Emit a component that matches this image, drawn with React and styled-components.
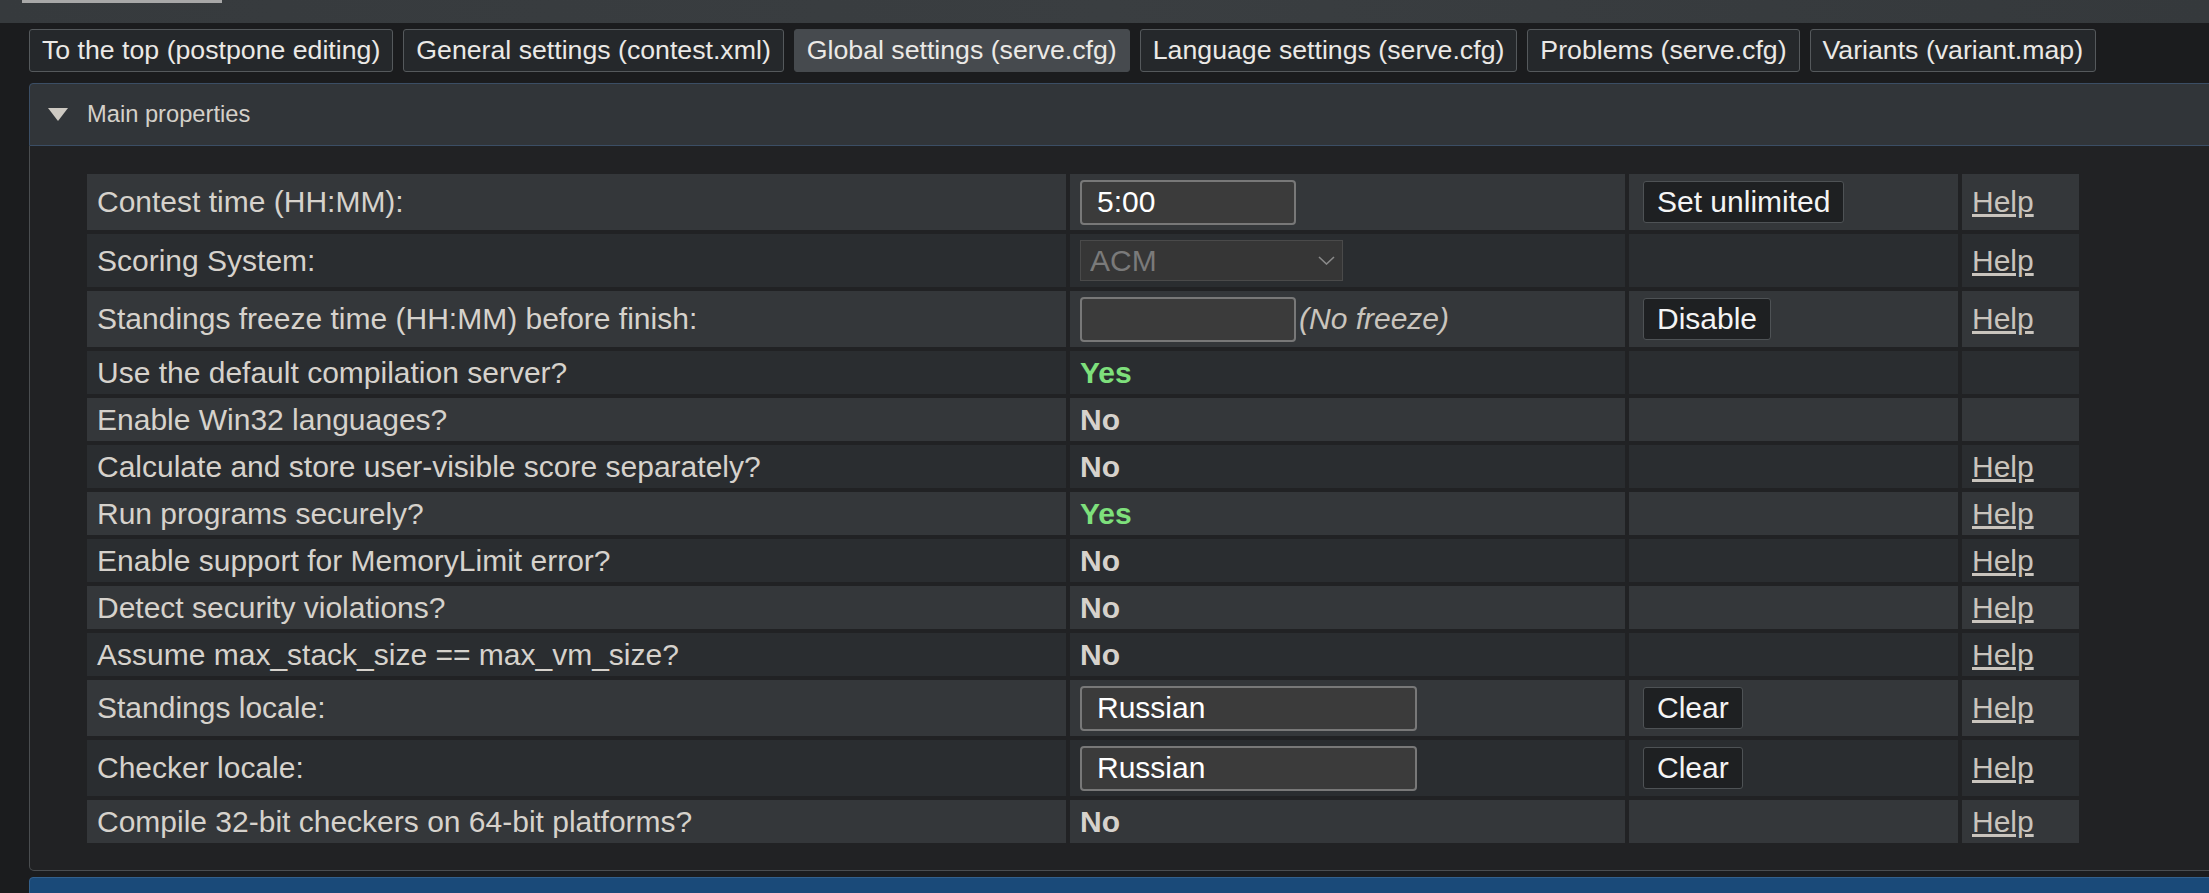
import styled, { createGlobalStyle } from "styled-components";

const GlobalStyle = createGlobalStyle`
  html, body {
    margin: 0;
    padding: 0;
    overflow: hidden;
    background: #1b1c1e;
    font-family: "Liberation Sans", Arial, sans-serif;
  }
`;

const tabs = [
  { name: "To the top (postpone editing)" },
  { name: "General settings (contest.xml)" },
  { name: "Global settings (serve.cfg)", active: true },
  { name: "Language settings (serve.cfg)" },
  { name: "Problems (serve.cfg)" },
  { name: "Variants (variant.map)" },
];

// kind: input | select | yes | no
const rows = [
  { label: "Contest time (HH:MM):", kind: "input", value: "5:00", w: 216, action: "Set unlimited", help: true, h: 56 },
  { label: "Scoring System:", kind: "select", value: "ACM", help: true, h: 53 },
  { label: "Standings freeze time (HH:MM) before finish:", kind: "input", value: "", w: 216, note: "(No freeze)", action: "Disable", help: true, h: 56 },
  { label: "Use the default compilation server?", kind: "yes", help: false, h: 43 },
  { label: "Enable Win32 languages?", kind: "no", help: false, h: 43 },
  { label: "Calculate and store user-visible score separately?", kind: "no", help: true, h: 43 },
  { label: "Run programs securely?", kind: "yes", help: true, h: 43 },
  { label: "Enable support for MemoryLimit error?", kind: "no", help: true, h: 43 },
  { label: "Detect security violations?", kind: "no", help: true, h: 43 },
  { label: "Assume max_stack_size == max_vm_size?", kind: "no", help: true, h: 43 },
  { label: "Standings locale:", kind: "input", value: "Russian", w: 337, action: "Clear", help: true, h: 56 },
  { label: "Checker locale:", kind: "input", value: "Russian", w: 337, action: "Clear", help: true, h: 56 },
  { label: "Compile 32-bit checkers on 64-bit platforms?", kind: "no", help: true, h: 43 },
];

const App = () => {
  return (
    <>
      <GlobalStyle />
      <TopBar>
        <ScrollMark />
      </TopBar>
      <Main>
        <Tabs>
          {tabs.map((t) => (
            <Tab key={t.name} $active={t.active}>
              {t.name}
            </Tab>
          ))}
        </Tabs>
        <Panel>
          <PanelHeader>
            <svg width="20" height="13" viewBox="0 0 20 13">
              <polygon points="0,0 20,0 10,13" fill="#cdc9c2" />
            </svg>
            <span>Main properties</span>
          </PanelHeader>
          <PanelBody>
            <SettingsTable>
              <colgroup>
                <col style={{ width: 979 }} />
                <col style={{ width: 555 }} />
                <col style={{ width: 329 }} />
                <col style={{ width: 117 }} />
              </colgroup>
              <tbody>
                {rows.map((r, i) => (
                  <Row key={r.label} $h={r.h} $light={i % 2 === 0}>
                    <Cell>{r.label}</Cell>
                    <Cell>
                      <ValueCell row={r} />
                    </Cell>
                    <Cell>{r.action && <ActionButton>{r.action}</ActionButton>}</Cell>
                    <Cell>{r.help && <HelpLink href="#">Help</HelpLink>}</Cell>
                  </Row>
                ))}
              </tbody>
            </SettingsTable>
          </PanelBody>
        </Panel>
        <NextPanel />
      </Main>
    </>
  );
};

const ValueCell = ({ row }) => {
  if (row.kind === "input") {
    return (
      <>
        <TextInput defaultValue={row.value} $w={row.w} />
        {row.note && <Note>{row.note}</Note>}
      </>
    );
  }
  if (row.kind === "select") {
    return (
      <SelectWrap>
        <FakeSelect disabled defaultValue={row.value}>
          <option>{row.value}</option>
        </FakeSelect>
        <Chevron width="17" height="9" viewBox="0 0 17 9">
          <polyline points="1,1 8.5,8 16,1" fill="none" stroke="#8a8a8a" strokeWidth="1.6" />
        </Chevron>
      </SelectWrap>
    );
  }
  return <Flag $yes={row.kind === "yes"}>{row.kind === "yes" ? "Yes" : "No"}</Flag>;
};

const TopBar = styled.div`
  height: 23px;
  background: linear-gradient(90deg, #363a3d, #3a3e41 50%, #35393c);
  position: relative;
`;

const ScrollMark = styled.div`
  position: absolute;
  left: 22px;
  top: 0;
  width: 200px;
  height: 3px;
  background: #a8a8a8;
`;

const Main = styled.div`
  padding: 6px 0 0 29px;
`;

const Tabs = styled.div`
  display: flex;
  gap: 10px;
`;

const Tab = styled.button`
  height: 43px;
  box-sizing: border-box;
  margin: 0;
  padding: 0 12px;
  font-family: "Liberation Sans", Arial, sans-serif;
  font-size: 26.7px;
  color: #ebe9e6;
  background: ${(p) => (p.$active ? "#464a4e" : "#25282b")};
  border: 1px solid ${(p) => (p.$active ? "#464a4e" : "#55595c")};
  border-radius: 3px;
  white-space: nowrap;
`;

const Panel = styled.div`
  margin-top: 11px;
  width: 2300px;
`;

const PanelHeader = styled.div`
  height: 63px;
  box-sizing: border-box;
  display: flex;
  align-items: center;
  gap: 19px;
  padding-left: 18px;
  background: #313539;
  border: 1px solid #3b4e65;
  border-radius: 4px 4px 0 0;
  font-size: 23.7px;
  color: #d4d0c9;
`;

const PanelBody = styled.div`
  padding: 24px 0 23px 53px;
  background: #212224;
  border: 1px solid #4a4d50;
  border-top: none;
  border-radius: 0 0 5px 5px;
`;

const SettingsTable = styled.table`
  border-collapse: separate;
  border-spacing: 4px;
  table-layout: fixed;
  width: 2000px;
`;

const Row = styled.tr`
  height: ${(p) => p.$h}px;
  background: ${(p) => (p.$light ? "#34373a" : "#2a2d30")};
`;

const Cell = styled.td`
  padding: 0 10px;
  vertical-align: middle;
  font-size: 30px;
  color: #d6d2cc;
  white-space: nowrap;
`;

const TextInput = styled.input`
  width: ${(p) => p.$w}px;
  height: 45px;
  box-sizing: border-box;
  margin: 0;
  padding: 0 0 0 15px;
  vertical-align: middle;
  background: #3b3b3b;
  border: 2px solid #787878;
  border-radius: 4px;
  font-family: "Liberation Sans", Arial, sans-serif;
  font-size: 30px;
  color: #ffffff;
  outline: none;
`;

const Note = styled.span`
  margin-left: 3px;
  font-style: italic;
  color: #c9c4bd;
  vertical-align: middle;
`;

const SelectWrap = styled.span`
  position: relative;
  display: inline-block;
  vertical-align: middle;
`;

const FakeSelect = styled.select`
  appearance: none;
  width: 263px;
  height: 41px;
  box-sizing: border-box;
  margin: 0;
  padding: 0 0 0 9px;
  background: #363636;
  border: 1px solid #4a4a4a;
  border-radius: 0;
  font-family: "Liberation Sans", Arial, sans-serif;
  font-size: 30px;
  color: #7a7a7a;
  opacity: 1;
`;

const Chevron = styled.svg`
  position: absolute;
  right: 8px;
  top: 16px;
  pointer-events: none;
`;

const Flag = styled.span`
  font-weight: bold;
  color: ${(p) => (p.$yes ? "#7ee07c" : "#d6d2cc")};
`;

const ActionButton = styled.button`
  height: 42px;
  box-sizing: border-box;
  margin: 0 0 0 4px;
  padding: 0 13px;
  background: #1e2022;
  border: 1px solid #4e5255;
  border-radius: 3px;
  font-family: "Liberation Sans", Arial, sans-serif;
  font-size: 30px;
  color: #f4f4f4;
  vertical-align: middle;
`;

const HelpLink = styled.a`
  color: #c9c4bd;
  text-decoration: underline;
`;

const NextPanel = styled.div`
  margin-top: 6px;
  width: 2300px;
  height: 60px;
  background: #1a4a79;
  border: 1px solid #33608c;
  border-radius: 4px 4px 0 0;
`;

export default App;
